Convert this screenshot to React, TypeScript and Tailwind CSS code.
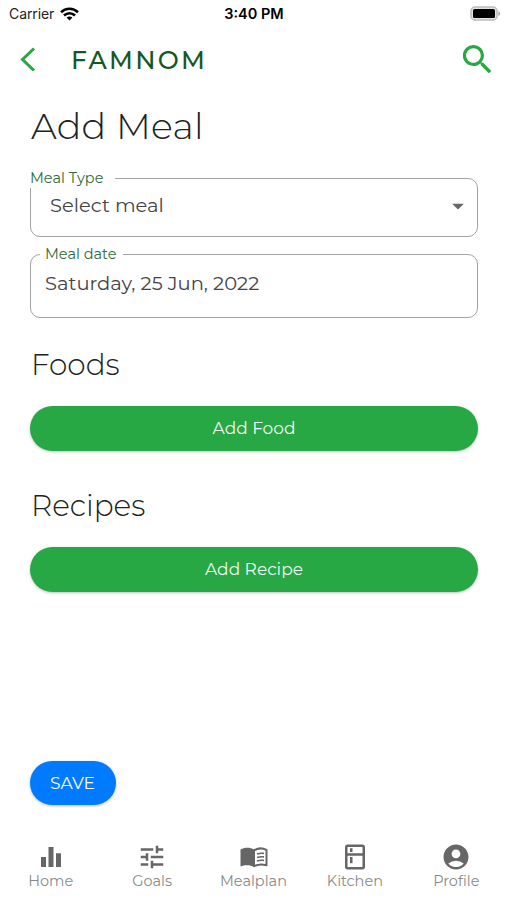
import type { ReactNode } from "react"
import {
  MdAccountCircle,
  MdArrowDropDown,
  MdEqualizer,
  MdOutlineKitchen,
  MdSearch,
  MdTune,
} from "react-icons/md"

const montserrat = "font-['Montserrat',Inter,sans-serif]"

function StatusBar() {
  return (
    <div className="grid h-7 grid-cols-3 items-center pr-[6px] pl-[9px] font-['Inter',sans-serif] text-black">
      <div className="-mt-px flex items-center gap-[6px]">
        <span className="text-[14px] leading-none tracking-[-0.1px] text-[#222]">Carrier</span>
        <svg width="19" height="14" viewBox="0 0 19 14" fill="none" stroke="#000" strokeWidth="2.7">
          <path d="M1 5.2C5.8.6 13.2.6 18 5.2" />
          <path d="M4 8.5c3.2-3 7.8-3 11 0" />
          <path d="M6.6 10.6c1.7-1.5 4.1-1.5 5.8 0L9.5 13.6z" fill="#000" stroke="none" />
        </svg>
      </div>
      <span className="-ml-[2px] text-center text-[14.5px] leading-none font-semibold whitespace-nowrap">
        3:40 PM
      </span>
      <svg className="-mt-px justify-self-end" width="31" height="15" viewBox="0 0 31 15">
        <rect x="1" y="1" width="26" height="13" rx="4" fill="#e4e4e4" stroke="#bcbcbc" strokeWidth="1.5" />
        <rect x="3" y="3" width="22" height="9" rx="1.5" fill="#000" />
        <path d="M28.3 5.2c2.4.8 2.4 3.8 0 4.6z" fill="#a8a8a8" />
      </svg>
    </div>
  )
}

function Header() {
  return (
    <header className="flex h-[62px] items-center pr-[10px] pl-5">
      <svg width="16" height="24" viewBox="0 0 16 24" fill="none" stroke="#28a745" strokeWidth="3">
        <path d="M14 1.5 2.5 12.5 14 23.5" />
      </svg>
      <span className="mt-[2px] ml-[35px] flex-1 text-[25px] leading-none font-medium tracking-[2.3px] text-[#155724]">
        FAMNOM
      </span>
      <MdSearch className="size-[39px] text-[#28a745]" />
    </header>
  )
}

function AddButton({ children }: { children: ReactNode }) {
  return (
    <button className="h-[45px] w-full rounded-full bg-[#28a745] pt-px text-[17px] text-white/95 shadow-[0_1px_3px_rgba(0,0,0,0.25)]">
      {children}
    </button>
  )
}

// Open book: solid left page, outlined right page with text lines
function BookIcon() {
  return (
    <svg className="ml-px h-[30px] w-[28px]" viewBox="0 0 28 30" fill="none" stroke="currentColor">
      <path d="M14 7.5C10.5 5.3 4.500 5 .5 7.500V24.500c4-1.700 10-1.700 13.500.5z" fill="currentColor" stroke="none" />
      <path d="M14 8.300c3.500-2.100 8.500-2.400 12.500-.5v15.500c-4-1.300-9-1-12.500.8z" strokeWidth="2" strokeLinejoin="round" />
      <path d="M17 12c2.300-.8 4.500-1 7-.6M17 15.500c2.300-.8 4.500-1 7-.6M17 19c2.300-.8 4.500-1 7-.6" strokeWidth="1.6" />
    </svg>
  )
}

const tabs = [
  { label: "Home", icon: <MdEqualizer className="size-[30px]" /> },
  { label: "Goals", icon: <MdTune className="size-[30px]" /> },
  { label: "Mealplan", icon: <BookIcon /> },
  { label: "Kitchen", icon: <MdOutlineKitchen className="size-[30px]" /> },
  { label: "Profile", icon: <MdAccountCircle className="size-[30px]" /> },
]

export default function App() {
  return (
    <div className={`flex h-[900px] w-[507px] flex-col bg-white text-[#212121] ${montserrat}`}>
      <StatusBar />
      <Header />
      <main className="flex flex-1 flex-col pr-[29px] pl-[30px]">
        <h1 className="mt-3 h-12 pl-px text-[36.5px] leading-[48px] font-[330] tracking-[0.2px]">Add Meal</h1>

        <div className="relative mt-[28px] h-[59px] rounded-[10px] border border-[#a2a2a2]">
          <span className="absolute -top-[10px] -left-[1px] h-[19px] w-[85px] bg-white text-[14.5px] leading-[18px] text-[#2f6b3c]">
            Meal Type
          </span>
          <div className="flex h-[53px] items-center justify-between pr-[5px] pl-[19px]">
            <span className="text-[19.5px] text-[#444]">Select meal</span>
            <MdArrowDropDown className="size-[28px] text-[#666]" />
          </div>
        </div>

        <div className="relative mt-[17px] h-[64px] rounded-[10px] border border-[#a2a2a2]">
          <span className="absolute -top-[10px] left-[9px] w-[83px] bg-white pl-[5px] text-[14.5px] leading-[18px] text-[#2f6b3c]">
            Meal date
          </span>
          <div className="flex h-[57px] items-center pl-[14px] text-[19.5px] text-[#444]">Saturday, 25 Jun, 2022</div>
        </div>

        <h2 className="mt-[26px] mb-[22px] h-10 pl-px text-[29.5px] leading-10 font-[330]">Foods</h2>
        <AddButton>Add Food</AddButton>
        <h2 className="mt-[34px] mb-[22px] h-10 pl-px text-[29.5px] leading-10 font-[330]">Recipes</h2>
        <AddButton>Add Recipe</AddButton>

        <button className="mt-auto mb-[31px] h-11 w-[86px] rounded-full bg-[#007bff] pt-0.5 pr-px text-[17px] text-white shadow-[0_1px_3px_rgba(0,0,0,0.25)]">
          SAVE
        </button>
      </main>
      <nav className="grid h-16 grid-cols-5 pt-[6px]">
        {tabs.map((tab) => (
          <div key={tab.label} className="flex flex-col items-center text-[#666]">
            {tab.icon}
            <span className="text-[14.5px] leading-[19px] text-[#8a8a8a]">{tab.label}</span>
          </div>
        ))}
      </nav>
    </div>
  )
}
